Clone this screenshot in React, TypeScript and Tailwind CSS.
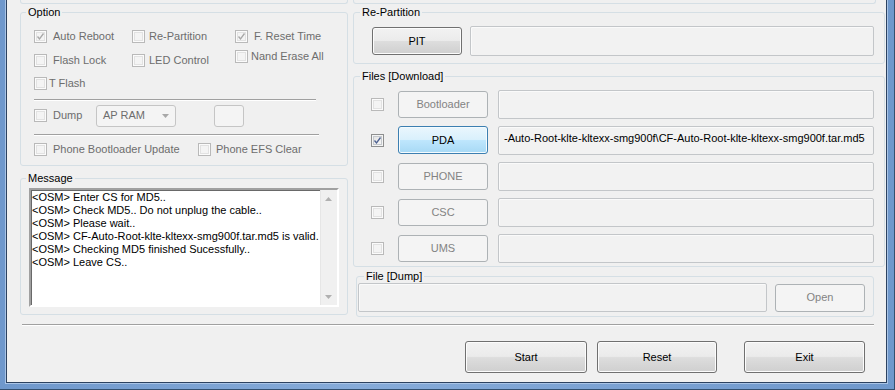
import type { ReactNode } from 'react';

type Variant = 'normal' | 'hot' | 'disabled';

const CheckBox = ({ checked = false, enabled = false }: { checked?: boolean; enabled?: boolean }) => (
  <span
    className={`flex h-[13px] w-[13px] shrink-0 items-center justify-center border ${
      enabled
        ? 'border-[#8e8f8f] bg-[linear-gradient(135deg,#dedede,#fbfbfb)] shadow-[inset_0_0_0_1px_#f4f4f4,inset_0_0_0_2px_#c5c9cd]'
        : 'border-[#b9b9b9] bg-[#f4f4f4] shadow-[inset_0_0_0_1px_#fbfbfb,inset_0_0_0_2px_#e2e2e2]'
    }`}
  >
    {checked && (
      <svg width="11" height="11" viewBox="0 0 11 11">
        <path
          d="M2.5 5.5 L4.5 8 L8.5 2.5"
          fill="none"
          stroke={enabled ? '#4d6191' : '#a8a8a8'}
          strokeWidth="1.3"
        />
      </svg>
    )}
  </span>
);

const Btn = ({
  children,
  className = '',
  variant = 'normal',
}: {
  children: ReactNode;
  className?: string;
  variant?: Variant;
}) => {
  const look = {
    normal:
      'border-[#707070] bg-[linear-gradient(#f2f2f2,#ebebeb_48%,#dddddd_52%,#cfcfcf)] shadow-[inset_0_0_0_1px_#fcfcfc] text-black',
    hot: 'border-[#3c7fb1] bg-[linear-gradient(#eaf6fd,#d9f0fc_48%,#bee6fd_52%,#a7d9f5)] shadow-[inset_0_0_0_1px_#f4fbfe] text-black',
    disabled: 'border-[#adb2b5] bg-[#f4f4f4] text-[#838383]',
  }[variant];
  return (
    <div className={`flex shrink-0 items-center justify-center rounded-[3px] border ${look} ${className}`}>
      {children}
    </div>
  );
};

const Field = ({ className = '', children }: { className?: string; children?: ReactNode }) => (
  <div
    className={`shrink-0 overflow-hidden whitespace-nowrap rounded-[2px] border border-[#c3c6c9] bg-[#f2f2f2] shadow-[inset_1px_1px_0_#fafafa] ${className}`}
  >
    {children}
  </div>
);

const Group = ({
  title,
  className = '',
  legend = 'ml-[6px]',
  children,
}: {
  title: string;
  className?: string;
  legend?: string;
  children?: ReactNode;
}) => (
  <fieldset className={`rounded-[3px] border border-[#d5dfe5] ${className}`}>
    <legend className={`${legend} px-[2px] leading-[13px] text-black`}>{title}</legend>
    {children}
  </fieldset>
);

const Opt = ({
  label,
  checked,
  className = '',
  gap = 'gap-[6px]',
}: {
  label: string;
  checked?: boolean;
  className?: string;
  gap?: string;
}) => (
  <div className={`flex shrink-0 items-center ${gap} ${className}`}>
    <CheckBox checked={checked} />
    <span className="whitespace-nowrap">{label}</span>
  </div>
);

const Etched = ({ className = '' }: { className?: string }) => (
  <div className={`border-t border-b border-t-[#a0a0a0] border-b-white ${className}`} />
);

const messages = [
  '<OSM> Enter CS for MD5..',
  '<OSM> Check MD5.. Do not unplug the cable..',
  '<OSM> Please wait..',
  '<OSM> CF-Auto-Root-klte-kltexx-smg900f.tar.md5 is valid.',
  '<OSM> Checking MD5 finished Sucessfully..',
  '<OSM> Leave CS..',
];

const files: { name: string; checked?: boolean; path?: string }[] = [
  { name: 'Bootloader' },
  {
    name: 'PDA',
    checked: true,
    path: '-Auto-Root-klte-kltexx-smg900f\\CF-Auto-Root-klte-kltexx-smg900f.tar.md5',
  },
  { name: 'PHONE' },
  { name: 'CSC' },
  { name: 'UMS' },
];

export default function App() {
  return (
    <div className="h-[390px] w-[895px] overflow-hidden bg-[linear-gradient(90deg,#6f98cc,#86abd9_40%,#6f98cc)] pb-[7px] pl-[6px] pr-[8px] font-['Liberation_Sans',Arial,sans-serif] text-[11px] shadow-[inset_-1px_-1px_0_#34506f]">
      <div className="flex h-full flex-col border-x border-b border-[#2c4260] bg-[#f0f0f0] shadow-[0_0_0_1px_#a9c4e6]">
        <div className="flex">
          {/* left column */}
          <div className="ml-[13px] flex w-[328px] flex-col">
            <div className="h-[4px] rounded-b-[3px] border-x border-b border-[#d5dfe5]" />
            <Group title="Option" className="mt-[2px] h-[160px]" legend="ml-[5px]">
              <div className="flex flex-col pl-[13px] pt-[5px] text-[#6d6d6d]">
                <div className="flex h-[24px] items-center">
                  <Opt label="Auto Reboot" checked className="w-[98px]" />
                  <Opt label="Re-Partition" className="w-[103px]" gap="gap-[4px]" />
                  <Opt label="F. Reset Time" checked />
                </div>
                <div className="flex h-[24px] items-center">
                  <Opt label="Flash Lock" className="w-[98px]" />
                  <Opt label="LED Control" className="w-[103px]" gap="gap-[4px]" />
                  <Opt label="Nand Erase All" className="mb-[8px]" gap="gap-[3px]" />
                </div>
                <div className="flex h-[22px] items-center">
                  <Opt label="T Flash" gap="gap-[2px]" />
                </div>
                <Etched className="mt-[5px] w-[282px]" />
                <div className="flex h-[29px] items-center">
                  <Opt label="Dump" className="w-[62px]" />
                  <div className="flex h-[22px] w-[80px] items-center justify-between rounded-[3px] border border-[#c5c5c5] bg-[#f4f4f4] pl-[6px] pr-[6px]">
                    <span>AP RAM</span>
                    <svg width="7" height="4" viewBox="0 0 7 4">
                      <path d="M0 0 H7 L3.5 4 Z" fill="#a8a8a8" />
                    </svg>
                  </div>
                  <div className="ml-[38px] h-[22px] w-[30px] rounded-[3px] border border-[#c5c5c5] bg-[#f4f4f4]" />
                </div>
                <Etched className="mt-[4px] w-[285px]" />
                <div className="flex h-[26px] items-center">
                  <Opt label="Phone Bootloader Update" className="w-[164px]" />
                  <Opt label="Phone EFS Clear" gap="gap-[5px]" />
                </div>
              </div>
            </Group>
            <Group title="Message" className="mt-[6px] h-[143px]" legend="ml-[5px]">
              <div className="ml-[8px] mt-[3px] flex h-[119px] w-[310px] border-2 border-t-[#a0a0a0] border-l-[#a0a0a0] border-b-white border-r-white bg-white shadow-[inset_1px_1px_0_#696969]">
                <div className="flex-1 pl-px pt-px leading-[13px] text-black">
                  {messages.map((m) => (
                    <div key={m} className="whitespace-nowrap">
                      {m}
                    </div>
                  ))}
                </div>
                <div className="flex w-[17px] flex-col justify-between bg-[#f0f0f0] shadow-[inset_1px_0_0_#e6e6e6]">
                  <div className="flex h-[17px] items-center justify-center">
                    <svg width="7" height="4" viewBox="0 0 7 4">
                      <path d="M0 4 H7 L3.5 0 Z" fill="#b0b0b0" />
                    </svg>
                  </div>
                  <div className="flex h-[17px] items-center justify-center">
                    <svg width="7" height="4" viewBox="0 0 7 4">
                      <path d="M0 0 H7 L3.5 4 Z" fill="#b0b0b0" />
                    </svg>
                  </div>
                </div>
              </div>
            </Group>
          </div>

          {/* right column */}
          <div className="ml-[5px] flex w-[532px] flex-col">
            <div className="mr-[9px] h-[4px] rounded-b-[3px] border-x border-b border-[#d5dfe5]" />
            <Group title="Re-Partition" className="mt-[2px] h-[58px]">
              <div className="mt-[7px] flex items-center pl-[18px]">
                <Btn className="h-[28px] w-[90px]">PIT</Btn>
                <Field className="ml-[8px] h-[30px] w-[404px]" />
              </div>
            </Group>
            <Group title="Files [Download]" className="mt-[6px] h-[197px]">
              <div className="flex flex-col pt-[3px]">
                {files.map((f) => (
                  <div key={f.name} className="flex h-[36px] items-center pl-[17px]">
                    <CheckBox checked={f.checked} enabled={f.checked} />
                    <Btn
                      variant={f.checked ? 'hot' : 'disabled'}
                      className={`ml-[14px] w-[90px] ${f.checked ? 'h-[28px]' : 'h-[27px]'}`}
                    >
                      {f.name}
                    </Btn>
                    <Field className="ml-[10px] h-[29px] w-[376px] pl-[5px] pt-[3px] text-black">{f.path}</Field>
                  </div>
                ))}
              </div>
            </Group>
            <Group title="File [Dump]" className="ml-[3px] mt-[3px] h-[47px] w-[518px]" legend="ml-[7px]">
              <div className="flex items-center pl-px">
                <Field className="h-[29px] w-[409px]" />
                <Btn variant="disabled" className="ml-[8px] h-[28px] w-[90px]">
                  Open
                </Btn>
              </div>
            </Group>
          </div>
        </div>

        <Etched className="ml-[15px] mt-[7px] w-[852px]" />

        <div className="mt-[15px] flex">
          <Btn className="ml-[458px] h-[32px] w-[122px]">Start</Btn>
          <Btn className="ml-[10px] h-[32px] w-[120px]">Reset</Btn>
          <Btn className="ml-[27px] h-[32px] w-[121px]">Exit</Btn>
        </div>
      </div>
    </div>
  );
}
